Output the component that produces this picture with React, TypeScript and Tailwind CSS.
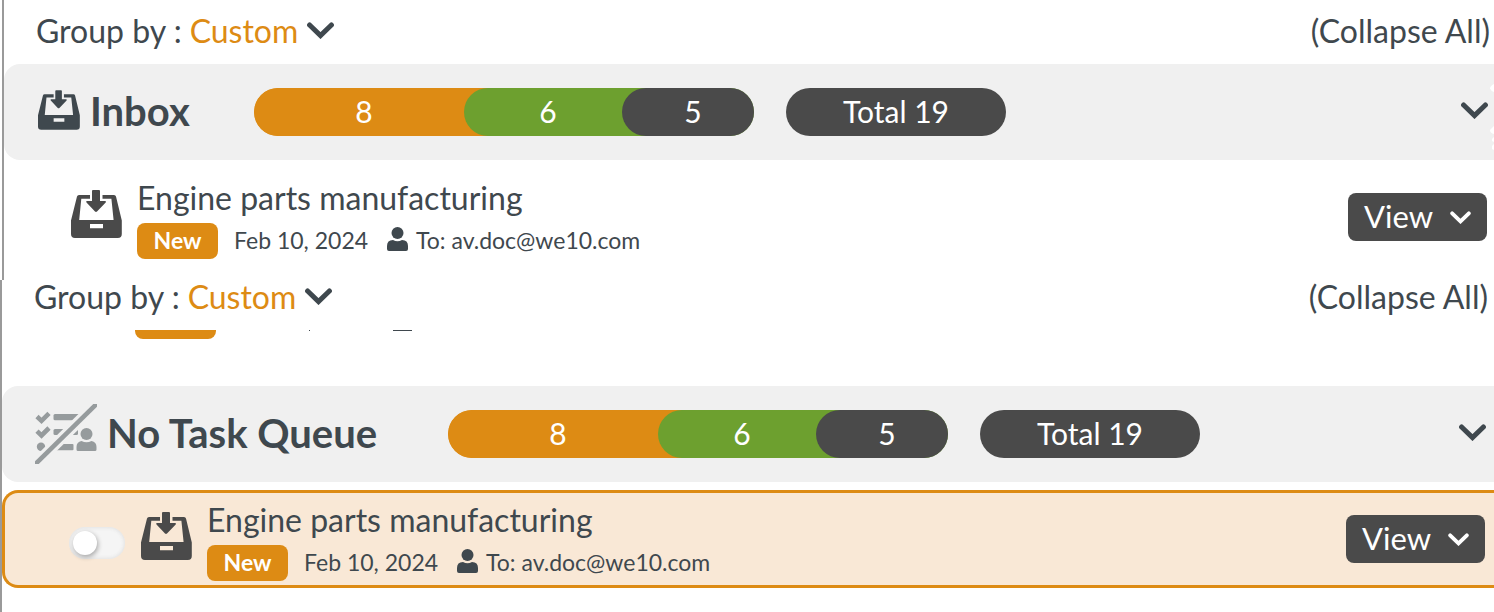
import React, { useState } from "react";
import { clsx } from "clsx";

interface Segment {
  value: number;
  size: string;
  color: string;
  // colour of the previous segment, visible behind the rounded left edge
  under: string;
}

interface Item {
  title: string;
  status: string;
  date: string;
  to: string;
}

const segments: Segment[] = [
  { value: 8, size: "w-[210px]", color: "bg-[#dd8b14]", under: "bg-[#dd8b14]" },
  { value: 6, size: "w-[158px]", color: "bg-[#6da02f]", under: "bg-[#dd8b14]" },
  { value: 5, size: "w-[132px]", color: "bg-[#4a4a4a]", under: "bg-[#6da02f]" },
];

const item: Item = {
  title: "Engine parts manufacturing",
  status: "New",
  date: "Feb 10, 2024",
  to: "av.doc@we10.com",
};

function ChevronIcon({ className }: { className?: string }) {
  return (
    <svg viewBox="0 0 27 17" className={clsx("shrink-0", className)} fill="none" aria-hidden="true">
      <path d="M2.6 3L13.5 13.6L24.4 3" stroke="currentColor" strokeWidth="5" strokeLinecap="round" />
    </svg>
  );
}

function InboxIcon({ className }: { className?: string }) {
  return (
    <svg viewBox="0 0 51 48" className={clsx("shrink-0", className)} fill="currentColor" aria-hidden="true">
      <path
        fillRule="evenodd"
        d="M8 5H19V8.7H10.3L8.2 30H42.6L40.4 8.7H31.5V5H43Q44.6 5 45 6.5L50.8 30.5V44Q50.8 48 46.8 48H4Q0 48 0 44V30.5L6 6.5Q6.4 5 8 5ZM19 34V38.3H32V34Z"
      />
      <path d="M22 0H28Q29 0 29 1V11H34Q35.8 11.2 34.7 12.6L26 21.5Q25 22.4 24 21.5L15.5 12.6Q14.4 11.2 16 11H21V1Q21 0 22 0Z" />
    </svg>
  );
}

function UserIcon({ className }: { className?: string }) {
  return (
    <svg viewBox="0 0 21 24" className={clsx("shrink-0", className)} fill="currentColor" aria-hidden="true">
      <circle cx="10.5" cy="6" r="6" />
      <path d="M6 13Q10.5 15.5 15 13Q21 13 21 19V22Q21 24 19 24H2Q0 24 0 22V19Q0 13 6 13Z" />
    </svg>
  );
}

function NoTaskIcon({ className }: { className?: string }) {
  return (
    <svg viewBox="0 0 61 60" className={clsx("shrink-0", className)} fill="#969b9d" aria-hidden="true">
      <g fill="none" stroke="#969b9d" strokeWidth="4.6">
        <path d="M1.5 12.5L6 16.8L13.5 9.3" />
        <path d="M1.5 27.2L6 31.5L13.5 24" />
      </g>
      <circle cx="5.5" cy="42.7" r="4.2" />
      <rect x="18" y="10" width="30" height="6.3" rx="1.5" />
      <rect x="18" y="25" width="24.5" height="6" rx="1.5" />
      <rect x="16" y="40" width="22" height="6.2" rx="1" />
      <path d="M-2 62L63 -2" stroke="#f0f0f0" strokeWidth="11" />
      <path d="M-2 62L63 -2" stroke="#969b9d" strokeWidth="4.5" />
      <circle cx="51" cy="30" r="6" />
      <path d="M46 37Q51 39.5 56 37Q61 38 61 43V45.5Q61 47 59.5 47H42.5Q41 47 41 45.5V43Q41 38 46 37Z" />
    </svg>
  );
}

// white marks peeking in at the right edge of the Inbox bar
function EdgeMarks() {
  return (
    <svg viewBox="0 0 4 68" className="absolute top-5 right-0 h-[68px] w-1" fill="#fff" aria-hidden="true">
      <path d="M4 0Q0 2 0 4.500Q1 7 4 8Z" />
      <path d="M4 42L0 46Q0 49 4 50Z" />
      <path d="M4 53L2 55V57L4 58ZM4 60L2 62V65L4 66Z" />
    </svg>
  );
}

function Toolbar({ id, className }: { id: string; className: string }) {
  return (
    <div className={clsx("flex items-center justify-between pl-8 text-[32px] leading-9", className)}>
      <div className="flex items-center gap-2">
        <label htmlFor={id}>Group by :</label>
        <select id={id} className="appearance-none bg-transparent text-[#dd8b14] outline-none">
          <option>Custom</option>
        </select>
        <ChevronIcon className="mb-0.5 h-[17px] w-[27px]" />
      </div>
      <button type="button">(Collapse All)</button>
    </div>
  );
}

function GroupHeader({
  title,
  icon,
  titleWidth,
  className,
  children,
}: {
  title: string;
  icon: React.ReactNode;
  titleWidth: string;
  className: string;
  children?: React.ReactNode;
}) {
  return (
    <div className={clsx("relative flex h-24 items-center rounded-l-2xl bg-[#f0f0f0]", className)}>
      {icon}
      <h2 className={clsx("shrink-0 pb-0.5 text-[40px] leading-[48px] font-bold", titleWidth)}>{title}</h2>
      <div className="flex h-12 shrink-0 overflow-hidden rounded-full text-[30px] text-white">
        {segments.map((segment) => (
          <div key={segment.value} className={clsx(segment.size, segment.under)}>
            <div className={clsx("flex h-full items-center justify-center rounded-l-full pb-0.5 pl-2.5", segment.color)}>
              {segment.value}
            </div>
          </div>
        ))}
      </div>
      <div className="ml-8 flex h-12 w-[220px] shrink-0 items-center justify-center rounded-full bg-[#4a4a4a] pb-0.5 text-[30px] text-white">
        Total 19
      </div>
      <button type="button" aria-label={`Toggle ${title}`} className="mb-1 ml-auto">
        <ChevronIcon className="h-[17px] w-[27px]" />
      </button>
      {children}
    </div>
  );
}

function ItemContent({ data }: { data: Item }) {
  return (
    <>
      <InboxIcon className="mt-[11px] h-12 w-[51px] text-[#4a4a4a]" />
      <div className="ml-[15px] flex flex-col gap-1">
        <h3 className="h-10 text-[32px] leading-[38px]">{data.title}</h3>
        <div className="flex h-9 items-center text-[23px]">
          <span className="flex h-9 w-[81px] items-center justify-center rounded-lg bg-[#dd8b14] pb-0.5 font-bold text-white">
            {data.status}
          </span>
          <span className="ml-4 w-[153px] pb-0.5">{data.date}</span>
          <UserIcon className="mb-1 h-6 w-[21px]" />
          <span className="ml-2 pb-0.5">To: {data.to}</span>
        </div>
      </div>
      <button
        type="button"
        className="mt-3.5 ml-auto flex h-12 w-[139px] items-center justify-between rounded-lg bg-[#4a4a4a] px-4 text-[31px] text-white"
      >
        <span className="pb-0.5">View</span>
        <ChevronIcon className="h-[13px] w-[21px]" />
      </button>
    </>
  );
}

export default function App() {
  const [selected, setSelected] = useState(false);

  return (
    <main className="overflow-hidden bg-white font-['Lato',sans-serif] text-[#3f484e]">
      <section className="ml-0.5 h-[280px] border-l-2 border-[#9a9a9a]">
        <Toolbar id="group-top" className="h-16 pr-1 pb-0.5" />
        <GroupHeader
          title="Inbox"
          titleWidth="w-[164px]"
          className="pr-1.5 pl-[34px]"
          icon={<InboxIcon className="mr-2.5 mb-1 h-10 w-[42px]" />}
        >
          <EdgeMarks />
        </GroupHeader>
        <div className="flex items-start pt-[19px] pr-[7px] pl-[67px]">
          <ItemContent data={item} />
        </div>
      </section>

      <section className="border-l-2 border-[#9a9a9a] pb-6">
        <Toolbar id="group-bottom" className="h-[50px] pr-1.5 pb-4" />
        {/* bottom edge of the row scrolled under the toolbar */}
        <div className="mb-[47px] flex h-[9px] items-start pl-[133px]">
          <div className="h-[9px] w-[81px] rounded-b-lg bg-[#dd8b14]" />
          <div className="ml-[93px] size-px bg-[#3f484e]" />
          <div className="ml-[83px] h-px w-[19px] bg-[#3f484e]" />
        </div>
        <GroupHeader
          title="No Task Queue"
          titleWidth="w-[341px]"
          className="pr-2 pl-[33px]"
          icon={<NoTaskIcon className="mr-2.5 h-[60px] w-[62px]" />}
        />
        <div className="mt-2 flex items-start rounded-l-2xl border-y-3 border-l-3 border-[#dd8b14] bg-[#f9e8d6] pt-2 pr-[9px] pb-1 pl-16">
          <input
            type="checkbox"
            aria-label="Select item"
            checked={selected}
            onChange={() => setSelected(!selected)}
            className="mt-[26px] mr-4 h-8 w-14 shrink-0 appearance-none rounded-full bg-[#f5f5f5] p-1 shadow-[inset_0_0_4px_#d9d9d9] before:block before:size-6 before:rounded-full before:bg-white before:shadow-[1px_2px_5px_#00000055] checked:before:ml-6"
          />
          <ItemContent data={item} />
        </div>
      </section>
    </main>
  );
}
